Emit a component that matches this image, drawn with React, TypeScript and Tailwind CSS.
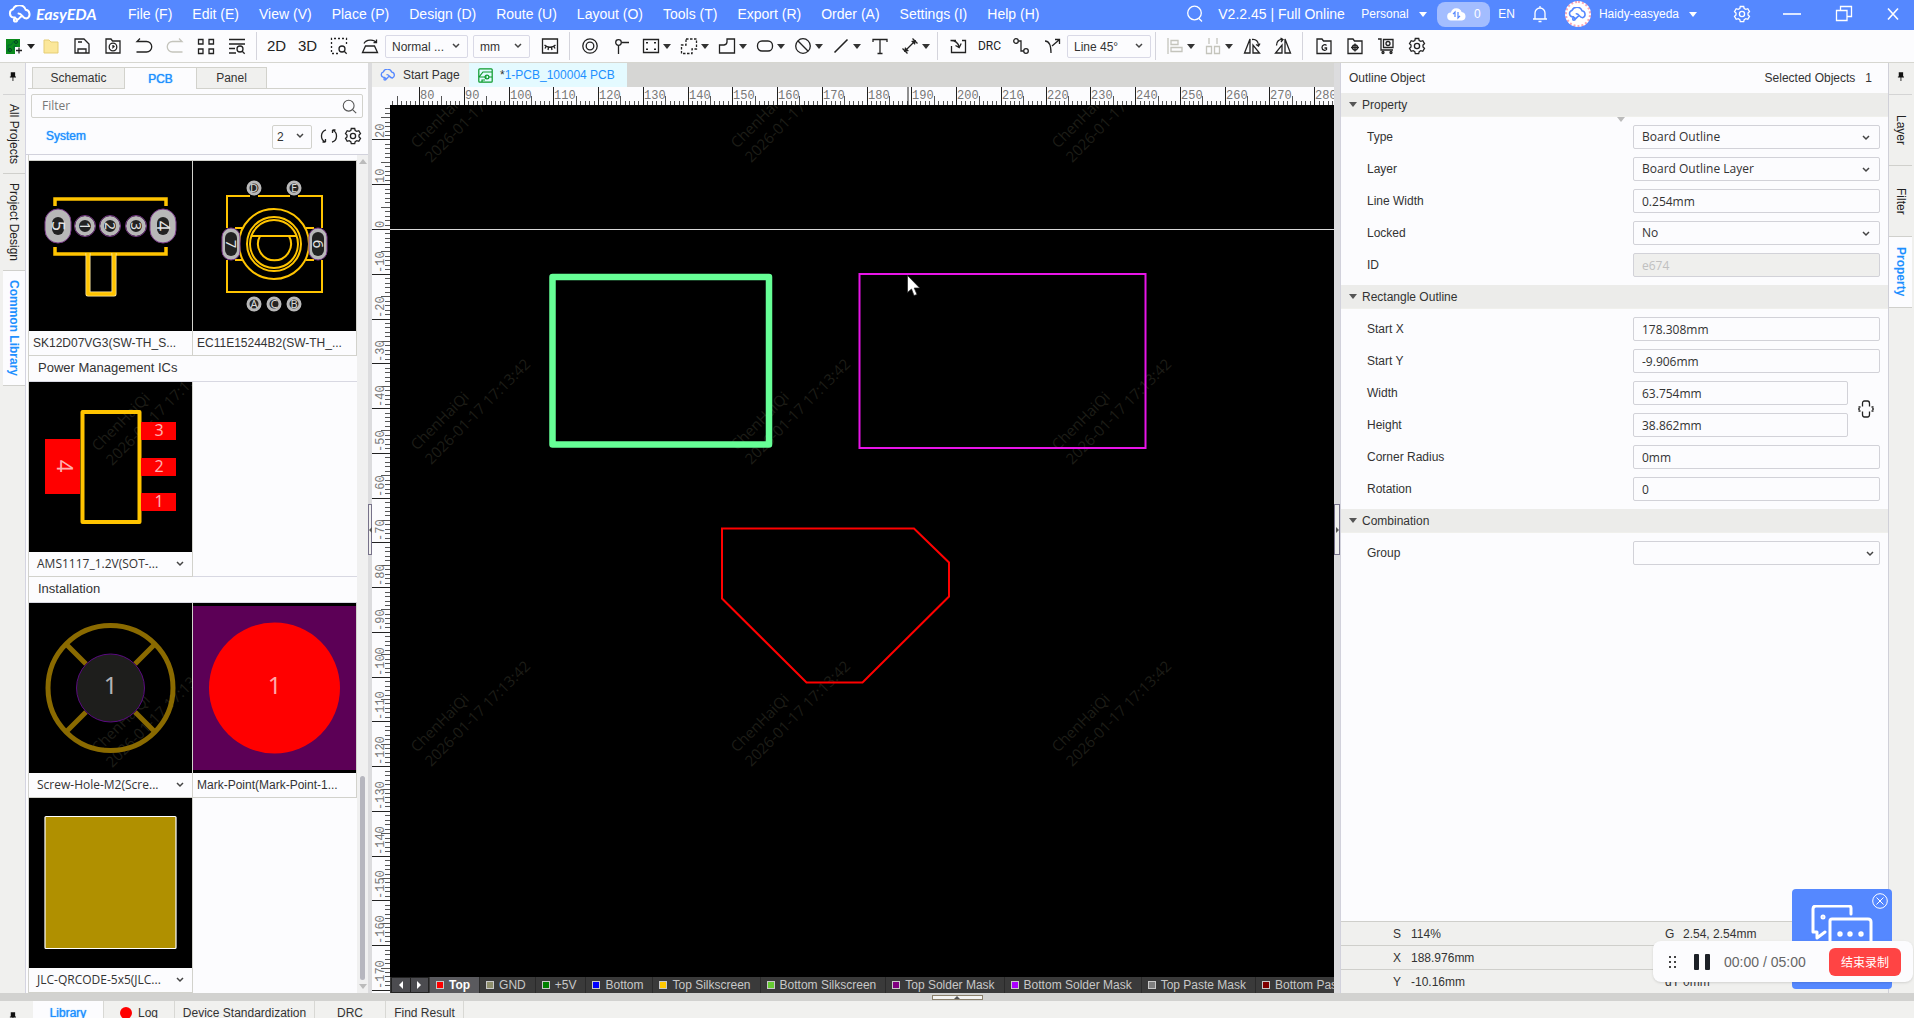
import React, { useEffect, useId, useRef, useState } from "react";

type P = { children?: React.ReactNode };

const ARIAL = "font-['Liberation_Sans',sans-serif]";

/* ---------- small drawing helpers ---------- */

function Ico({ children, size = 18, className = "" }: P & { size?: number; className?: string }) {
  return (
    <svg
      width={size}
      height={size}
      viewBox="0 0 18 18"
      fill="none"
      stroke="currentColor"
      strokeWidth="1.3"
      className={`shrink-0 ${className}`}
      aria-hidden="true"
    >
      {children}
    </svg>
  );
}

function Caret({ className = "" }: { className?: string }) {
  return (
    <svg width="8" height="5" viewBox="0 0 8 5" className={`shrink-0 ${className}`} aria-hidden="true">
      <path d="M0 0h8L4 5z" fill="currentColor" />
    </svg>
  );
}

function Chevron({ className = "" }: { className?: string }) {
  return (
    <svg width="8" height="6" viewBox="0 0 8 6" fill="none" stroke="#444" strokeWidth="1.5" className={`shrink-0 ${className}`} aria-hidden="true">
      <path d="M1 1l3 3 3-3" />
    </svg>
  );
}

function CloudMark({ className = "", width = 24 }: { className?: string; width?: number }) {
  return (
    <svg width={width} height={(width * 18) / 24} viewBox="0 0 24 18" fill="none" stroke="currentColor" strokeWidth="2" strokeLinecap="round" className={`shrink-0 ${className}`} aria-hidden="true">
      <path d="M7 12.500H5.500A4.200 4.200 0 0 1 5 4.300A6.800 6.800 0 0 1 17.700 4.800A4.500 4.500 0 0 1 18.500 13.500C14 13.500 14.500 8.500 10.500 8.500" />
      <path d="M13.500 11.500C11.500 11.500 11.500 15 8.500 15" />
      <circle cx="7.500" cy="15" r="1.600" />
    </svg>
  );
}

const GearPath = () => (
  <>
    <path d="M7.300 1.500h3.400l.5 2 1.600.9 2-.7 1.700 3-1.500 1.400v1.800l1.500 1.400-1.700 3-2-.6-1.600.9-.5 2H7.300l-.5-2-1.600-.9-2 .6-1.700-3L3 9.900V8.100L1.500 6.700l1.700-3 2 .7 1.600-.9z" />
    <circle cx="9" cy="9" r="2.600" />
  </>
);

function Pin() {
  return (
    <svg width="7" height="9" viewBox="0 0 8 10" fill="#111" aria-hidden="true">
      <path d="M2 0h5v5h1v1H5v4H4V6H1V5h1z" />
    </svg>
  );
}

/* ---------- header ---------- */

const menus = ["File (F)", "Edit (E)", "View (V)", "Place (P)", "Design (D)", "Route (U)", "Layout (O)", "Tools (T)", "Export (R)", "Order (A)", "Settings (I)", "Help (H)"];

function Header() {
  return (
    <header className="flex h-[30px] shrink-0 items-center bg-[#5588ff] pb-[2px] pl-2 text-white">
      <div className="flex w-[120px] items-center gap-1">
        <CloudMark />
        <span className="font-['Lato',sans-serif] text-base leading-5 font-bold italic">EasyEDA</span>
      </div>
      <nav className="flex gap-5 text-sm leading-5 whitespace-nowrap">
        {menus.map((m) => (
          <button key={m} type="button">{m}</button>
        ))}
      </nav>
      <div className="ml-auto flex items-center whitespace-nowrap">
        <button type="button" aria-label="Search" className="mr-3.5">
          <Ico><circle cx="8.500" cy="8" r="6.800" /><path d="M13 13.500l3 3" /></Ico>
        </button>
        <span className="mr-4 w-[127px] text-sm leading-5">V2.2.45 | Full Online</span>
        <button type="button" className="mr-2.5 flex w-[66px] items-center justify-between text-xs">Personal<Caret /></button>
        <button type="button" aria-label="Sync" className="mr-2 flex h-[25px] w-[53px] items-center justify-center gap-2 rounded-lg bg-[#a3bdff] text-xs">
          <svg width="19" height="14" viewBox="0 0 19 14" aria-hidden="true">
            <path d="M4.500 13.500a4 4 0 0 1-.6-8A5.600 5.600 0 0 1 14.600 5a4.300 4.300 0 0 1 .4 8.500z" fill="#fff" />
            <path d="M8 10V5L6 7.200M11 5v6l2-2.200" fill="none" stroke="#5588ff" strokeWidth="1.200" />
          </svg>
          0
        </button>
        <button type="button" className="mr-4 text-xs">EN</button>
        <button type="button" aria-label="Notifications" className="mr-4">
          <Ico><path d="M2 14h14M4 14V8a5 5 0 0 1 10 0v6M9 1v2M7.500 16.500h3" /></Ico>
        </button>
        <button type="button" className="mr-9 flex items-center text-xs">
          <span className="mr-2 flex size-[26px] items-center justify-center rounded-full border-2 border-dotted border-[#f9a8b8] bg-white text-[#5588ff]">
            <CloudMark width={19} />
          </span>
          <span className="mr-2.5">Haidy-easyeda</span>
          <Caret />
        </button>
        <button type="button" aria-label="Preferences" className="mr-8"><Ico><GearPath /></Ico></button>
        <button type="button" aria-label="Minimize" className="mr-[34px]"><Ico><path d="M0 9h18" strokeWidth="1.600" /></Ico></button>
        <button type="button" aria-label="Restore" className="mr-[31px]"><Ico><path d="M5.500 5V1.500h11v10H12M1.500 5.500H12v10H1.500z" /></Ico></button>
        <button type="button" aria-label="Close" className="mr-3"><Ico><path d="M4 3.500l10 11M14 3.500l-10 11" strokeWidth="1.600" /></Ico></button>
      </div>
    </header>
  );
}

/* ---------- toolbar ---------- */

function Tool({ label, children, dim }: P & { label: string; dim?: boolean }) {
  return (
    <button type="button" aria-label={label} className={`flex h-6 w-[31px] shrink-0 items-center justify-center ${dim ? "text-[#c4c4bc]" : "text-[#222]"}`}>
      {children}
    </button>
  );
}

function DropTool({ label, children, dim }: P & { label: string; dim?: boolean }) {
  return (
    <button type="button" aria-label={label} className="flex h-6 w-[38px] shrink-0 items-center gap-[3px] pl-1.5 text-[#222]">
      <span className={dim ? "text-[#c4c4bc]" : "text-[#222]"}>{children}</span>
      <Caret className="text-[#333]" />
    </button>
  );
}

const Sep = () => <div className="mx-1 h-7 w-px shrink-0 bg-[#d4d4dc]" />;

function BarSelect({ label, value, className }: { label: string; value: string; className: string }) {
  return (
    <div className={`relative shrink-0 ${className}`}>
      <select aria-label={label} className="h-[23px] w-full appearance-none rounded-xs border border-[#d9d9e6] bg-[#fcfcfe] pl-1.5 text-xs text-[#333]">
        <option>{value}</option>
      </select>
      <Chevron className="pointer-events-none absolute top-[9px] right-2" />
    </div>
  );
}

function Toolbar() {
  return (
    <div className="flex h-[33px] shrink-0 items-center border-b border-[#d6d6d0] bg-[#fcfcfe] pl-1.5 text-[#222]">
      <button type="button" aria-label="New" className="flex w-[29px] items-center gap-1">
        <svg width="17" height="17" viewBox="0 0 17 17" aria-hidden="true">
          <path d="M0 1h14v8H9v7H0z" fill="#0b8a1c" />
          <path d="M2 14V7h3l3-4M8 12V8h3" fill="none" stroke="#063" strokeWidth="1" />
          <circle cx="10" cy="4" r="1.500" fill="none" stroke="#042" />
          <circle cx="4" cy="12" r="1.500" fill="none" stroke="#042" />
          <path d="M13 9.500v6M10 12.500h6" stroke="#222" strokeWidth="1.300" />
        </svg>
        <Caret />
      </button>
      <Tool label="Open"><svg width="16" height="16" viewBox="0 0 16 16" aria-hidden="true"><path d="M1 2h5l2 2h7v11H1z" fill="#fbe79a" stroke="#e5cd74" /></svg></Tool>
      <Tool label="Save"><Ico><path d="M2 2h9l5 5v9H2zM5 16v-4h8v4M5 5h4" /></Ico></Tool>
      <Tool label="Recent"><Ico><path d="M2 2h5l1.500 2H16v12H2z" /><circle cx="9" cy="10" r="3.800" /><path d="M9 8v2.500l1.500-1.500" /></Ico></Tool>
      <Tool label="Undo"><Ico><path d="M5 1.500L2 4.500h9.500a5 5 0 0 1 0 10.500H1.500" /></Ico></Tool>
      <Tool label="Redo" dim><Ico><path d="M13 1.500l3 3H6.500a5 5 0 0 0 0 10.500h10" /></Ico></Tool>
      <Tool label="Grid"><Ico><path d="M1.500 2.500h4.500v4.500H1.500zM12 2.500h4.500v4.500H12zM1.500 12h4.500v4.500H1.500zM12 12h4.500v4.500H12z" /></Ico></Tool>
      <Tool label="Find"><Ico><path d="M1 2.500h16M1 7h16M1 11.500h6M1 16h7" /><circle cx="12" cy="12" r="3" /><path d="M14.200 14.200l2.500 2.500" /></Ico></Tool>
      <Sep />
      <Tool label="2D view"><span className="text-[15px] leading-5">2D</span></Tool>
      <Tool label="3D view"><span className="text-[15px] leading-5">3D</span></Tool>
      <Tool label="Zoom area"><Ico><path d="M8 16.500H1.500v-15h15V9" strokeDasharray="2 2" /><circle cx="12" cy="12" r="3" /><path d="M14.200 14.200l2.500 2.500" /></Ico></Tool>
      <Tool label="Flip board"><Ico><path d="M4.500 9h9l3 6.500h-15zM3 6.500C5 2.500 13 2 15 5.500M15.500 2.500v3.200h-3" /></Ico></Tool>
      <BarSelect label="View mode" value="Normal ..." className="w-[83px]" />
      <BarSelect label="Unit" value="mm" className="ml-[5px] w-[57px]" />
      <span className="ml-1 flex"><Tool label="Toggle ratlines"><Ico><path d="M1.500 2h15v14h-15z" /><path d="M3.500 8c3 3 8 3 11 0M5 9.500l-1 2M7.500 10.500l-.5 2.500M10.500 10.500l.5 2.500M13 9.500l1 2" /></Ico></Tool></span>
      <Sep />
      <Tool label="Via"><Ico><circle cx="9" cy="9" r="7.200" /><circle cx="9" cy="9" r="3.800" /></Ico></Tool>
      <Tool label="Pad"><Ico><circle cx="6.500" cy="5.500" r="2.800" /><path d="M9.500 5.500H17M6.500 8.500V17" /></Ico></Tool>
      <DropTool label="Rectangle region"><Ico><path d="M1.500 2.500h15v13h-15z" /><path d="M4 5h2v1.500H4zM12 5h2v1.500h-2zM4 11.500h2V13H4zM12 11.500h2V13h-2z" fill="currentColor" stroke="none" /></Ico></DropTool>
      <DropTool label="Dashed region"><Ico><path d="M6 2h10.500v10H12v4.500H1.500V8H6z" strokeDasharray="2.500 1.500" /></Ico></DropTool>
      <DropTool label="Polygon"><Ico><path d="M9 2h7.500v14h-15V8H6q3-.5 3-3z" /></Ico></DropTool>
      <DropTool label="Oval"><Ico><rect x="1.500" y="4" width="15" height="10" rx="4.500" /></Ico></DropTool>
      <DropTool label="Keepout"><Ico><circle cx="9" cy="9" r="7.300" /><path d="M3.800 3.800l10.400 10.400" /></Ico></DropTool>
      <DropTool label="Line"><Ico><path d="M2.500 15.500l13-13" strokeWidth="1.600" /></Ico></DropTool>
      <Tool label="Text"><Ico><path d="M2 5V2.500h14V5M9 2.500v14M6.500 16.500h5" /></Ico></Tool>
      <DropTool label="Dimension"><Ico><path d="M4 14L14 4M1.500 11.500l5 5M11.500 1.500l5 5" /><path d="M3 15l1-5 4 4zM15 3l-1 5-4-4z" fill="currentColor" stroke="none" /></Ico></DropTool>
      <Sep />
      <Tool label="Import changes"><Ico><path d="M7 3.500H1.500M13 3.500h3.500v12h-14V9M1.500 3.500C6 3.500 9 5 10 10M6.500 8.500l3.700 2 2-4" /></Ico></Tool>
      <span className="ml-px flex"><Tool label="Design rule check"><span className="font-['Roboto',sans-serif] text-xs leading-4">DRC</span></Tool></span>
      <Tool label="Route track"><Ico><circle cx="4" cy="4" r="2.300" /><circle cx="14" cy="14" r="2.300" /><path d="M6.500 4H9v10h2.500" /></Ico></Tool>
      <Tool label="Branch"><Ico><path d="M2 4c4 0 6 3 6 12M16 3l-7 6M12 2.500h4.500V7" /></Ico></Tool>
      <BarSelect label="Routing angle" value="Line 45°" className="w-[84px]" />
      <Sep />
      <DropTool label="Align" dim><Ico><path d="M2 1v16M5 3.500h7v4H5zM5 10.500h11v4H5z" /></Ico></DropTool>
      <DropTool label="Distribute" dim><Ico><path d="M5 1v6M13 1v6M2.500 9.500h5v7h-5zM10.500 9.500h5v7h-5z" /></Ico></DropTool>
      <Tool label="Mirror horizontally"><Ico><path d="M7 2v14H1.500zM10 16V8l6.500 8zM9 2.500c4-.5 6.500 2 6.500 6M17 6.500L15.500 9l-2.500-1.500" /></Ico></Tool>
      <Tool label="Mirror vertically"><Ico><path d="M11 2v14h5.500zM8 16V8l-6.500 8zM9 2.500c-4-.5-6.500 2-6.500 6M6.500 1l2.500 1.500L7 5" /></Ico></Tool>
      <Sep />
      <span className="ml-px flex"><Tool label="Gerber"><Ico><path d="M2 2h5l1.500 2H16v12.500H2z" /><path d="M11.500 8.500c-1-1.500-4.500-1-4.500 2s3.500 3.500 4.500 2V11H9.500" /></Ico></Tool></span>
      <Tool label="Pick and place"><Ico><path d="M2 2h5l1.500 2H16v12.500H2z" /><circle cx="9" cy="10.500" r="2.500" /><path d="M9 6.500v8M5 10.500h8" /></Ico></Tool>
      <Tool label="Order PCB"><Ico><path d="M1 2h3v11h12M6.500 2.500h9.500v8H6.500z" /><circle cx="11" cy="6.500" r="2" /><circle cx="6" cy="15.500" r="1" /><circle cx="14" cy="15.500" r="1" /></Ico></Tool>
      <Tool label="Settings"><Ico><GearPath /></Ico></Tool>
    </div>
  );
}

/* ---------- side rails ---------- */

function Rail({ side, tabs }: { side: "left" | "right"; tabs: { name: string; cls: string; active?: boolean }[] }) {
  return (
    <aside className={`flex w-[26px] shrink-0 flex-col bg-[#f0f0ee] ${side === "left" ? "border-r border-[#d4d4e0] pl-[3px]" : "border-l border-[#d0d0d8] pr-[2px]"}`}>
      <button type="button" aria-label="Pin panel" className={`flex h-8 shrink-0 items-center justify-center border-b border-[#d4d4d4] pb-1 ${side === "left" ? "pr-1" : ""}`}><Pin /></button>
      {tabs.map((t) => (
        <button
          key={t.name}
          type="button"
          className={`flex shrink-0 items-center justify-center border-b border-[#d0d0cc] text-xs leading-4 whitespace-nowrap [writing-mode:vertical-rl] ${t.cls} ${t.active ? "bg-[#fcfcfe] font-bold text-[#1e90ff]" : "text-[#222]"}`}
        >
          {t.name}
        </button>
      ))}
    </aside>
  );
}

/* ---------- library ---------- */

function Watermark({ x, y }: { x: number; y: number }) {
  return (
    <g transform={`translate(${x} ${y}) rotate(-45)`} fill="#1d1d17" fontFamily="'Open Sans',sans-serif" fontSize="15" aria-hidden="true">
      <text x="0" y="0">ChenHaiQi</text>
      <text x="0" y="20">2026-01-17 17:13:42</text>
    </g>
  );
}

function Thumb({ children, title }: P & { title: string }) {
  return (
    <svg viewBox="0 0 163 170" className="block h-[170px] w-full bg-black" preserveAspectRatio="none" role="img" aria-label={title}>
      {children}
    </svg>
  );
}

const GOLD = "#ffc400";

function SlideSwitch() {
  const holes = [{ x: 56, t: "1" }, { x: 81, t: "2" }, { x: 107, t: "3" }];
  const ends = [{ x: 29, t: "5" }, { x: 134, t: "4" }];
  return (
    <Thumb title="Slide switch footprint">
      <path d="M26 45v-7h111v7M26 86v7h111v-7" fill="none" stroke={GOLD} strokeWidth="3.500" />
      <path d="M59 92v41h26V92" fill="none" stroke="#ffe9a0" strokeWidth="5" strokeLinejoin="round" />
      <path d="M59 92v41h26V92" fill="none" stroke={GOLD} strokeWidth="3.500" strokeLinejoin="round" />
      {ends.map((e) => (
        <g key={e.t}>
          <rect x={e.x - 13} y="48" width="26" height="34" rx="13" fill="#b8b8b8" stroke="#7a3a8a" />
          <rect x={e.x - 6} y="56" width="12" height="18" rx="6" fill="#222" />
          <text transform={`translate(${e.x - 6} 65) rotate(90)`} textAnchor="middle" fontSize="18" fill="#e4e4e4" fontFamily="'Noto Sans',sans-serif">{e.t}</text>
        </g>
      ))}
      {holes.map((h) => (
        <g key={h.t}>
          <circle cx={h.x} cy="65" r="8" fill="#222" stroke="#b8b8b8" strokeWidth="4" />
          <circle cx={h.x} cy="65" r="10.500" fill="none" stroke="#7a3a8a" />
          <text transform={`translate(${h.x - 5} 65) rotate(90)`} textAnchor="middle" fontSize="14" fill="#e4e4e4" fontFamily="'Noto Sans',sans-serif">{h.t}</text>
        </g>
      ))}
    </Thumb>
  );
}

function Encoder() {
  const pins = [{ x: 61, y: 27, t: "D" }, { x: 101, y: 27, t: "E" }, { x: 61, y: 143, t: "A" }, { x: 81, y: 143, t: "C" }, { x: 101, y: 143, t: "B" }];
  const sides = [{ x: 38, t: "7" }, { x: 125, t: "6" }];
  return (
    <Thumb title="Rotary encoder footprint">
      <g fill="none" stroke={GOLD} strokeWidth="2">
        <path d="M34 67V35h23M65 35h32M105 35h24v32M34 99v32h95V99M42 67h8M42 99h8M113 67h8M113 99h8" />
        <circle cx="81" cy="83" r="35" />
        <circle cx="81" cy="83" r="27" />
        <circle cx="81" cy="83" r="24" />
        <path d="M59 75h45M67 75a16.500 16.500 0 1 0 29 0" />
      </g>
      {sides.map((s) => (
        <g key={s.t}>
          <rect x={s.x - 9} y="67" width="18" height="32" rx="9" fill="#b8b8b8" stroke="#7a3a8a" />
          <rect x={s.x - 6} y="71" width="12" height="24" rx="6" fill="#222" />
          <text transform={`translate(${s.x - 5} 83) rotate(90)`} textAnchor="middle" fontSize="15" fill="#e4e4e4" fontFamily="'Noto Sans',sans-serif">{s.t}</text>
        </g>
      ))}
      {pins.map((p) => (
        <g key={p.t}>
          <circle cx={p.x} cy={p.y} r="6" fill="#222" stroke="#b8b8b8" strokeWidth="3" />
          <text x={p.x} y={p.y + 4} textAnchor="middle" fontSize="11" fill="#d8d8d8" fontFamily="'Noto Sans',sans-serif">{p.t}</text>
        </g>
      ))}
    </Thumb>
  );
}

function Sot() {
  const pads = [{ y: 40, t: "3" }, { y: 76, t: "2" }, { y: 111, t: "1" }];
  return (
    <Thumb title="SOT footprint">
      <Watermark x={69} y={70} />
      <rect x="53.500" y="30" width="57" height="110" fill="none" stroke={GOLD} strokeWidth="4" strokeLinejoin="round" />
      <rect x="16" y="57" width="35" height="55" fill="#f00" />
      <text transform="translate(28 84) rotate(90)" textAnchor="middle" fontSize="22" fill="#ffb0b0" fontFamily="'Noto Sans',sans-serif">4</text>
      {pads.map((p) => (
        <g key={p.t}>
          <rect x="112" y={p.y} width="35" height="18" fill="#f00" />
          <text x="130" y={p.y + 14} textAnchor="middle" fontSize="16" fill="#ffb0b0" fontFamily="'Noto Sans',sans-serif">{p.t}</text>
        </g>
      ))}
    </Thumb>
  );
}

function Screw() {
  return (
    <Thumb title="Screw hole footprint">
      <Watermark x={69} y={151} />
      <g fill="none" stroke="#8a6a00" strokeWidth="5">
        <circle cx="81.500" cy="85" r="62.500" />
        <path d="M57 61L37 41M106 61l20-20M57 109l-20 20M106 109l20 20" />
      </g>
      <circle cx="81.500" cy="85" r="34" fill="#1e1e1c" stroke="#5a0a80" />
      <text x="81.500" y="91" textAnchor="middle" fontSize="24" fill="#b4b4b4" fontFamily="'Noto Sans',sans-serif">1</text>
    </Thumb>
  );
}

function MarkPoint() {
  return (
    <Thumb title="Mark point footprint">
      <rect y="3" width="163" height="164" fill="#5c0056" />
      <circle cx="81.500" cy="85" r="65.500" fill="#f00" />
      <text x="81.500" y="91" textAnchor="middle" fontSize="24" fill="#ffa8a8" fontFamily="'Noto Sans',sans-serif">1</text>
    </Thumb>
  );
}

function QrCode() {
  return (
    <Thumb title="QR code placeholder">
      <rect x="16" y="18.500" width="131" height="132" rx="1" fill="#b09000" stroke="#fff" strokeWidth="1.200" />
    </Thumb>
  );
}

function Part({ children, name, menu }: P & { name: string; menu?: boolean }) {
  return (
    <figure className="flex w-1/2 flex-col border-r border-b border-[#d2d2cc] bg-[#fcfcfe]">
      {children}
      <figcaption className={`flex h-6 items-center text-xs whitespace-nowrap text-[#333] ${menu ? "justify-between pr-1 pl-2 font-['Open_Sans',sans-serif]" : "pl-1"}`}>
        {name}
        {menu && <button type="button" aria-label={`Versions of ${name}`} className="flex size-4 items-center justify-center"><Chevron /></button>}
      </figcaption>
    </figure>
  );
}

const Group = ({ children }: P) => <h3 className="h-[26px] border-b border-[#d8d8e2] pl-[9px] text-[13px] leading-6 text-[#333]">{children}</h3>;

function Library() {
  return (
    <section className="flex w-[342px] shrink-0 flex-col bg-[#fcfcfe]">
      <div className="mx-[2px] mt-1 flex h-[22px] shrink-0 text-xs">
        <span className="w-1 border-b border-[#d2d2cc]" />
        <button type="button" className="w-[93px] border border-[#d2d2cc] bg-[#f0f0ee] text-[#333]">Schematic</button>
        <button type="button" className="w-[71px] border-t border-[#d2d2cc] text-[#1e90ff] [text-shadow:0_0_1px_#1e90ff]">PCB</button>
        <button type="button" className="w-[71px] border border-[#d2d2cc] bg-[#f0f0ee] text-[#333]">Panel</button>
        <span className="flex-1 border-b border-[#d2d2cc]" />
      </div>
      <div className="mx-[5px] mt-[5px] flex h-6 shrink-0 items-center rounded-xs border border-[#d2d2cc] pr-[5px] pl-2.5">
        <input aria-label="Filter" placeholder="Filter" className="min-w-0 flex-1 bg-transparent font-['Open_Sans',sans-serif] text-xs text-[#333] outline-none placeholder:text-[#777]" />
        <Ico size={15} className="text-[#555]"><circle cx="8" cy="8" r="6.500" /><path d="M13 13l4 4" /></Ico>
      </div>
      <div className="flex h-9 shrink-0 items-center pr-1.5 pl-5">
        <span className="flex-1 text-xs text-[#1e90ff] [text-shadow:0_0_1px_#1e90ff]">System</span>
        <div className="relative w-10">
          <select aria-label="Columns" className="h-6 w-full appearance-none rounded-xs border border-[#d2d2cc] bg-[#fcfcfe] pl-1 text-xs text-[#333]">
            <option>2</option>
          </select>
          <Chevron className="pointer-events-none absolute top-[9px] right-2" />
        </div>
        <button type="button" aria-label="Refresh" className="ml-2 text-[#222]"><Ico><path d="M6 2.800A6.500 6.500 0 0 0 5.500 15M5.500 15H2.500M5.500 15v-3M12 15.200A6.500 6.500 0 0 0 12.500 3M12.500 3h3M12.500 3v3" /></Ico></button>
        <button type="button" aria-label="Library settings" className="ml-1.5 text-[#222]"><Ico><GearPath /></Ico></button>
      </div>
      <div className="flex min-h-0 flex-1 overflow-hidden border-t border-[#d2d2dc]">
        <div className="ml-[2px] min-w-0 flex-1 overflow-hidden border-l border-[#d2d2cc]">
          <div className="flex h-1.5 items-end overflow-hidden border-b border-[#d2d2cc]">
            <span className="w-1/2 pl-1 text-xs leading-6 whitespace-nowrap text-[#333]">Key-B_SM_6X6X5H(SW…</span>
            <span className="w-1/2 pl-1 text-xs leading-6 whitespace-nowrap text-[#333]">Key-B_SM_6X6X5H(SW…</span>
          </div>
          <div className="flex">
            <Part name="SK12D07VG3(SW-TH_S..."><SlideSwitch /></Part>
            <Part name="EC11E15244B2(SW-TH_..."><Encoder /></Part>
          </div>
          <Group>Power Management ICs</Group>
          <div className="flex">
            <Part name="AMS1117_1.2V(SOT-..." menu><Sot /></Part>
            <div className="w-1/2 border-b border-[#d8d8e2]" />
          </div>
          <Group>Installation</Group>
          <div className="flex">
            <Part name="Screw-Hole-M2(Scre..." menu><Screw /></Part>
            <Part name="Mark-Point(Mark-Point-1..."><MarkPoint /></Part>
          </div>
          <div className="flex">
            <Part name="JLC-QRCODE-5x5(JLC..." menu><QrCode /></Part>
          </div>
        </div>
        <div className="flex w-[11px] shrink-0 flex-col items-center justify-between bg-[#f0f0f0] py-1">
          <Caret className="rotate-180 text-[#bbb]" />
          <div className="mt-auto mb-1 h-[204px] w-[5px] rounded-full bg-[#b6b6be]" />
          <Caret className="text-[#bbb]" />
        </div>
      </div>
    </section>
  );
}

/* ---------- splitters ---------- */

function Splitter({ side }: { side: "left" | "right" }) {
  return (
    <div className={`flex shrink-0 flex-col bg-[#dcdcde] pt-[441px] ${side === "left" ? "w-1" : "w-1.5"}`}>
      <button type="button" aria-label={`Collapse ${side} panel`} className="flex h-[51px] w-full items-center justify-center border border-[#77728a] bg-[#f0f0ee]">
        <svg width="3" height="6" viewBox="0 0 3 6" className="shrink-0" aria-hidden="true"><path d={side === "left" ? "M3 0v6L0 3z" : "M0 0v6l3-3z"} fill="#555" /></svg>
      </button>
    </div>
  );
}

/* ---------- canvas ---------- */

const UNIT = 4.476;
const H80 = 29;
const V0 = 124;

function useSize() {
  const ref = useRef<HTMLDivElement>(null);
  const [size, setSize] = useState({ w: 0, h: 0 });
  useEffect(() => {
    const el = ref.current;
    if (!el) return;
    const read = () => setSize({ w: el.clientWidth, h: el.clientHeight });
    read();
    const ro = new ResizeObserver(read);
    ro.observe(el);
    return () => ro.disconnect();
  }, []);
  return { ref, ...size };
}

function HRuler() {
  const { ref, w } = useSize();
  const count = Math.max(0, Math.floor((w - H80) / UNIT) + 7);
  const ticks = Array.from({ length: count }, (_, i) => 74 + i);
  return (
    <div ref={ref} className="h-[18px] min-w-0 flex-1">
      <svg className="block h-[18px] w-full" aria-hidden="true">
        {ticks.map((n) => {
          const x = Math.round(H80 + (n - 80) * UNIT) + 0.5;
          const top = n % 10 === 0 ? 0 : n % 5 === 0 ? 9 : 14;
          return <line key={n} x1={x} x2={x} y1={top} y2="18" stroke={n % 10 === 0 ? "#222" : "#555"} />;
        })}
        {ticks.filter((n) => n % 10 === 0).map((n) => (
          <text key={n} x={Math.round(H80 + (n - 80) * UNIT) + 1} y="12" fontSize="12" fill="#777" fontFamily="'Liberation Mono',monospace">{n}</text>
        ))}
        <line x1="518" x2="518" y1="0" y2="18" stroke="#222" />
      </svg>
    </div>
  );
}

function VRuler() {
  const { ref, h } = useSize();
  const count = Math.max(0, Math.floor((h - V0) / UNIT) + 28);
  const ticks = Array.from({ length: count }, (_, i) => 27 - i);
  return (
    <div ref={ref} className="w-[18px] shrink-0 overflow-hidden">
      <svg width="18" height={h} className="block" aria-hidden="true">
        {ticks.map((n) => {
          const y = Math.round(V0 - n * UNIT) + 0.5;
          const left = n % 10 === 0 ? 0 : n % 5 === 0 ? 9 : 13;
          return <line key={n} x1={left} x2="18" y1={y} y2={y} stroke={n % 10 === 0 ? "#222" : "#555"} />;
        })}
        {ticks.filter((n) => n % 10 === 0).map((n) => (
          <text key={n} transform={`translate(12 ${Math.round(V0 - n * UNIT) - 1}) rotate(-90)`} fontSize="12" fill="#777" fontFamily="'Liberation Mono',monospace">{n}</text>
        ))}
      </svg>
    </div>
  );
}

function Board() {
  const marks = [27, 347, 668].flatMap((x) => [44, 346, 648].map((y) => ({ x, y })));
  return (
    <svg className="block min-h-0 w-full flex-1 bg-black" role="img" aria-label="PCB canvas">
      {marks.map((m) => <Watermark key={`${m.x}-${m.y}`} x={m.x} y={m.y} />)}
      <line x1="0" x2="100%" y1="124.500" y2="124.500" stroke="#d8d8d8" />
      <rect x="162.500" y="172" width="216.500" height="167.500" fill="none" stroke="#66ff96" strokeWidth="6.500" strokeLinejoin="round" />
      <rect x="469.500" y="169" width="286" height="174" fill="none" stroke="#e815e8" strokeWidth="2" />
      <path d="M332 423.500h192l35 34v34L472.500 577.500H416.500L332 493.500z" fill="none" stroke="#f00" strokeWidth="2" />
      <path d="M517.500 170.500v17l4-3.500 2.500 6.500 3-1-2.800-6.500h5.500z" fill="#fff" stroke="#222" strokeWidth=".7" />
    </svg>
  );
}

const layers = [
  { n: "Top", c: "bg-[#ff0000]", active: true },
  { n: "GND", c: "bg-[#8e8e6c]" },
  { n: "+5V", c: "bg-[#008000]" },
  { n: "Bottom", c: "bg-[#0000ff]" },
  { n: "Top Silkscreen", c: "bg-[#ffc800]" },
  { n: "Bottom Silkscreen", c: "bg-[#66cc33]" },
  { n: "Top Solder Mask", c: "bg-[#800080]" },
  { n: "Bottom Solder Mask", c: "bg-[#aa00ff]" },
  { n: "Top Paste Mask", c: "bg-[#808080]" },
  { n: "Bottom Paste Mask", c: "bg-[#800000]" },
];

function LayerBar() {
  return (
    <div className="flex h-4 shrink-0 overflow-hidden bg-[#3a3a3a] text-xs leading-4 text-[#c8c8c8]">
      <div className="mr-px ml-px flex w-[38px] shrink-0 border border-[#222] bg-[#4c4c50]">
        <button type="button" aria-label="Previous layers" className="flex flex-1 items-center justify-center border-r border-[#222]"><svg width="4" height="8" viewBox="0 0 4 8" aria-hidden="true"><path d="M4 0v8L0 4z" fill="#fff" /></svg></button>
        <button type="button" aria-label="Next layers" className="flex flex-1 items-center justify-center"><svg width="4" height="8" viewBox="0 0 4 8" aria-hidden="true"><path d="M0 0v8l4-4z" fill="#fff" /></svg></button>
      </div>
      {layers.map((l) => (
        <button key={l.n} type="button" className={`flex shrink-0 items-center gap-[5px] border-r border-[#2a2a2a] pr-[9px] pl-1.5 whitespace-nowrap ${l.active ? "bg-[#5a5a5e] font-bold text-white" : ""}`}>
          <span className={`size-2 border border-[#c8c8c8] ${l.c}`} />
          {l.n}
        </button>
      ))}
    </div>
  );
}

function Editor() {
  return (
    <main className="flex min-w-0 flex-1 flex-col bg-[#fcfcfe]">
      <div className="flex h-6 shrink-0 bg-[#d6d6d4] text-xs whitespace-nowrap">
        <button type="button" className="flex w-[97px] shrink-0 items-center gap-[7px] bg-[#f0f0ee] pl-2 text-[#333]">
          <CloudMark width={16} className="text-[#5588ff]" />Start Page
        </button>
        <button type="button" className="flex shrink-0 items-center gap-[7px] bg-[#e4faff] pr-3 pl-[9px] text-[#1e90ff]">
          <svg width="15" height="15" viewBox="0 0 15 15" fill="none" stroke="#0a9a2a" strokeWidth="1.200" aria-hidden="true"><rect x=".8" y=".8" width="13.400" height="13.400" rx="1" /><path d="M1 9l4-5h9M9 9H1M11 9h3M4 14v-2h3" /><circle cx="9" cy="9" r="1.900" /></svg>
          <span><span className="text-[#333]">*</span>1-PCB_100004 PCB</span>
        </button>
      </div>
      <div className="flex h-[18px] shrink-0"><div className="w-[18px] shrink-0" /><HRuler /></div>
      <div className="flex min-h-0 flex-1">
        <VRuler />
        <div className="flex min-w-0 flex-1 flex-col"><Board /><LayerBar /></div>
      </div>
    </main>
  );
}

/* ---------- property panel ---------- */

const Section = ({ children }: P) => (
  <h2 className="flex h-6 items-center border-b border-[#f0f0ec] bg-[#ececea] pl-2 text-xs text-[#333]">
    <button type="button" className="flex items-center gap-[5px]"><Caret className="text-[#555]" />{children}</button>
  </h2>
);

const fieldCls = "h-6 w-full appearance-none rounded-xs border border-[#d2d2d8] px-2 font-['Open_Sans',sans-serif] text-xs leading-4 text-[#333] outline-none";

function Row({ label, value, select, disabled }: { label: string; value: string; select?: boolean; disabled?: boolean }) {
  const id = useId();
  return (
    <div className="mt-2 flex h-6 items-center pl-[26px] text-xs text-[#333]">
      <label htmlFor={id} className="flex-1">{label}</label>
      <div className="relative w-[247px]">
        {select ? (
          <>
            <select id={id} className={`${fieldCls} bg-[#fcfcfe]`}><option>{value}</option></select>
            <Chevron className={`pointer-events-none absolute top-[10px] ${value ? "right-2.5" : "right-1.5"}`} />
          </>
        ) : (
          <input id={id} defaultValue={value} disabled={disabled} className={`${fieldCls} bg-[#fcfcfe] disabled:bg-[#efefed] disabled:text-[#c0c0c0]`} />
        )}
      </div>
    </div>
  );
}

function SizeRow({ label, value }: { label: string; value: string }) {
  const id = useId();
  return (
    <div className="mt-2 flex h-6 items-center pl-[26px] text-xs text-[#333]">
      <label htmlFor={id} className="flex-1">{label}</label>
      <input id={id} defaultValue={value} className={`${fieldCls} max-w-[215px] bg-[#fcfcfe]`} />
    </div>
  );
}

const Status = ({ a, b, c, d }: { a: string; b: string; c: string; d: string }) => (
  <div className="flex h-6 items-center border-t border-[#cfcfcb] pl-[52px] text-xs text-[#333]">
    <span className="w-[18px]">{a}</span>
    <span className="flex-1">{b}</span>
    <span className="w-[18px]">{c}</span>
    <span className="w-[205px]">{d}</span>
  </div>
);

function Properties() {
  return (
    <section className="flex w-[548px] shrink-0 flex-col border-l border-[#d2d2dc] bg-[#fcfcfe]">
      <div className="flex h-[30px] shrink-0 items-center pr-4 pl-2 text-xs text-[#333]">
        <span className="flex-1">Outline Object</span>
        <span className="mr-2.5">Selected Objects</span>
        <span>1</span>
      </div>
      <div className="relative">
        <Section>Property</Section>
        <Caret className="absolute top-6 left-[276px] text-[#bbb]" />
      </div>
      <div className="pr-2 pb-2">
        <Row label="Type" value="Board Outline" select />
        <Row label="Layer" value="Board Outline Layer" select />
        <Row label="Line Width" value="0.254mm" />
        <Row label="Locked" value="No" select />
        <Row label="ID" value="e674" disabled />
      </div>
      <Section>Rectangle Outline</Section>
      <div className="pr-2 pb-2">
        <Row label="Start X" value="178.308mm" />
        <Row label="Start Y" value="-9.906mm" />
        <div className="flex items-center">
          <div className="flex-1">
            <SizeRow label="Width" value="63.754mm" />
            <SizeRow label="Height" value="38.862mm" />
          </div>
          <button type="button" aria-label="Keep aspect ratio" className="mt-2 flex w-8 justify-center text-[#222]">
            <Ico className="ml-1"><path d="M5.500 6.500V3.500q0-2.500 2-2.500h3q2 0 2 2.500v3M5.500 11.500v3q0 2.500 2 2.500h3q2 0 2-2.500v-3M1.500 7h2M1 9h2M1.500 11h2M14.500 7h2M15 9h2M14.500 11h2" /></Ico>
          </button>
        </div>
        <Row label="Corner Radius" value="0mm" />
        <Row label="Rotation" value="0" />
      </div>
      <Section>Combination</Section>
      <div className="pr-2"><Row label="Group" value="" select /></div>
      <div className="mt-auto bg-[#f0f0ee]">
        <Status a="S" b="114%" c="G" d="2.54, 2.54mm" />
        <Status a="X" b="188.976mm" c="dX" d="0mm" />
        <Status a="Y" b="-10.16mm" c="dY" d="0mm" />
      </div>
    </section>
  );
}

/* ---------- bottom bar ---------- */

function BottomBar() {
  const tab = "h-6 border-r border-[#d8d8d4]";
  return (
    <footer className="h-[25px] shrink-0 overflow-hidden bg-[#f1f1ef]">
      <div className="flex h-2 justify-center bg-[#d2d2d0] pt-[2px]">
        <button type="button" aria-label="Toggle bottom panel" className="flex h-[5px] w-[51px] items-center justify-center border border-[#8a7f6a] bg-[#f4f4f2]">
          <svg width="6" height="3" viewBox="0 0 6 3" aria-hidden="true"><path d="M3 0l3 3H0z" fill="#555" /></svg>
        </button>
      </div>
      <div className="flex items-start text-xs whitespace-nowrap text-[#333]">
        <button type="button" aria-label="Pin bottom panel" className="flex h-5 w-[33px] items-end justify-center pr-2"><Pin /></button>
        <button type="button" className={`${tab} w-[71px] bg-[#fcfcfe] text-[#1e90ff] [text-shadow:0_0_1px_#1e90ff]`}>Library</button>
        <button type="button" className={`${tab} flex w-[71px] items-center justify-center gap-1.5`}><span className="size-3 rounded-full bg-[#ff0000]" />Log</button>
        <button type="button" className={`${tab} w-[140px]`}>Device Standardization</button>
        <button type="button" className={`${tab} w-[71px]`}>DRC</button>
        <button type="button" className={`${tab} w-[78px]`}>Find Result</button>
      </div>
    </footer>
  );
}

/* ---------- floating widgets ---------- */

function ChatWidget() {
  return (
    <div className="absolute right-[22px] bottom-[29px] flex size-[100px] justify-center rounded-sm bg-[#5588ff] pt-4 text-white">
      <button type="button" aria-label="Open chat" className="h-[42px]">
        <svg width="62" height="50" viewBox="0 0 62 50" fill="none" stroke="currentColor" strokeWidth="3" strokeLinejoin="round" strokeLinecap="round" aria-hidden="true">
          <path d="M40 9V3q0-2-2-2H5q-3 0-3 3v23h4v6l8-6" />
          <path d="M21 14h36q3 0 3 3v31H19V16q0-2 2-2z" />
          <circle cx="12" cy="12" r="1" />
          <circle cx="29" cy="29" r="1.200" /><circle cx="39" cy="29" r="1.200" /><circle cx="50" cy="29" r="1.200" />
        </svg>
      </button>
      <button type="button" aria-label="Close chat" className="absolute top-1 right-1">
        <svg width="16" height="16" viewBox="0 0 16 16" fill="none" stroke="currentColor" aria-hidden="true"><circle cx="8" cy="8" r="7.300" /><path d="M4.500 4.500l7 7M11.500 4.500l-7 7" /></svg>
      </button>
    </div>
  );
}

function Recorder() {
  return (
    <div className="absolute right-px bottom-9 flex h-[41px] w-[260px] items-center rounded-lg bg-[#fcfcfe] pr-3 pl-4 shadow-sm">
      <svg width="7" height="12" viewBox="0 0 7 12" fill="#444" className="mr-[18px]" aria-hidden="true">
        <path d="M0 0h2v2H0zM5 0h2v2H5zM0 5h2v2H0zM5 5h2v2H5zM0 10h2v2H0zM5 10h2v2H5z" />
      </svg>
      <button type="button" aria-label="Pause" className="mr-3.5">
        <svg width="16" height="16" viewBox="0 0 16 16" fill="#1c2026" aria-hidden="true"><rect width="5" height="16" rx="1" /><rect x="11" width="5" height="16" rx="1" /></svg>
      </button>
      <span className="flex-1 text-sm leading-5 whitespace-nowrap text-[#666]">00:00 / 05:00</span>
      <button type="button" className="h-7 w-[72px] rounded-md bg-[#ff4444] font-['Noto_Sans_CJK_SC',sans-serif] text-xs text-white">结束录制</button>
    </div>
  );
}

export default function App() {
  return (
    <div className={`relative flex h-screen flex-col overflow-hidden bg-[#f1f1ef] ${ARIAL}`}>
      <Header />
      <Toolbar />
      <div className="flex min-h-0 flex-1">
        <Rail
          side="left"
          tabs={[
            { name: "All Projects", cls: "h-[79px]" },
            { name: "Project Design", cls: "h-[97px]" },
            { name: "Common Library", cls: "h-[115px]", active: true },
          ]}
        />
        <Library />
        <Splitter side="left" />
        <Editor />
        <Splitter side="right" />
        <Properties />
        <Rail
          side="right"
          tabs={[
            { name: "Layer", cls: "h-[71px]" },
            { name: "Filter", cls: "h-[71px]" },
            { name: "Property", cls: "h-[71px]", active: true },
          ]}
        />
      </div>
      <BottomBar />
      <ChatWidget />
      <Recorder />
    </div>
  );
}
